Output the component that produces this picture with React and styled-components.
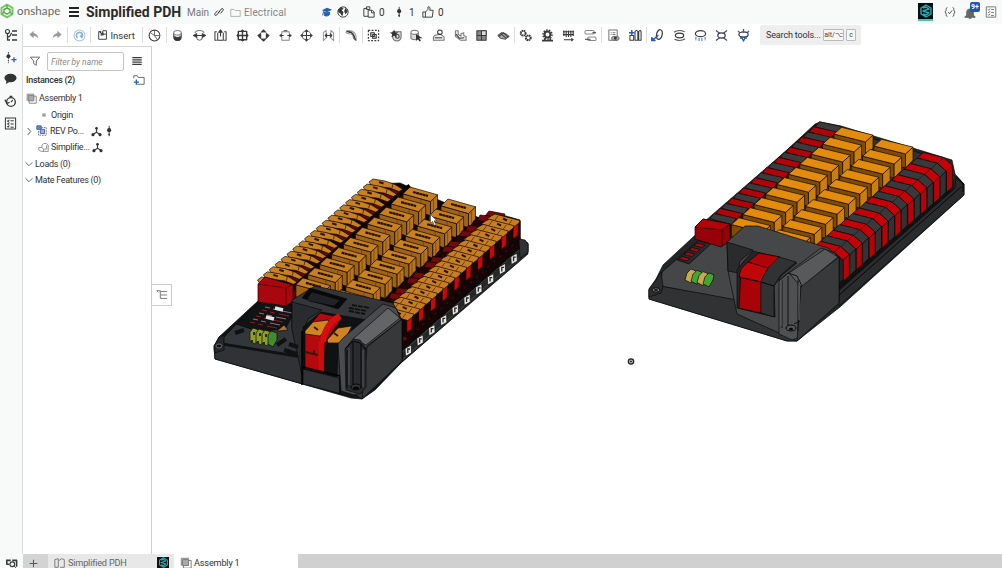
import React from 'react';
import styled, { createGlobalStyle } from 'styled-components';

const Global = createGlobalStyle`
  * { box-sizing: border-box; }
  body { margin: 0; overflow: hidden; background: #fff; font-family: Roboto, "Liberation Sans", sans-serif; color: #333; font-size: 9px; }
`;
const Page = styled.div`width: 1002px; height: 568px; display: flex; flex-direction: column; overflow: hidden;`;
const Header = styled.header`height: 24px; background: #f8f9f9; display: flex; align-items: center; flex: none;`;
const Brand = styled.div`width: 69px; display: flex; align-items: center; gap: 3px; font-family: Lato, sans-serif; font-size: 11.5px; letter-spacing: 0.12px; color: #666; line-height: 20px; padding-bottom: 2px;`;
const Menu = styled.div`width: 10px; height: 10px; display: flex; flex-direction: column; justify-content: space-between; i { height: 2px; background: #222; }`;
const Title = styled.h1`margin: 0 0 0 7px; font-size: 14px; width: 101px; white-space: nowrap; color: #2b2b2b;`;
const Label = styled.span`font-size: ${p => p.$size || 9}px; width: ${p => p.$w ? p.$w + 'px' : 'auto'}; font-weight: ${p => p.$bold ? 500 : 400}; color: ${p => p.$c || '#333'}; letter-spacing: ${p => p.$ls || 0}px; white-space: nowrap; flex: none;`;
const Glyph = styled.svg`width: ${p => p.$s || 14}px; height: ${p => p.$s || 14}px; flex: none; fill: none; stroke: ${p => p.$c || '#3a3a3a'}; stroke-width: ${p => p.$sw || 1.1}; stroke-linejoin: round; overflow: visible;`;
const Spacer = styled.div`width: ${p => p.$w}px; flex: none;`;
const HeaderRight = styled.div`margin-left: auto; display: flex; align-items: center; height: 24px; padding-right: 5px;`;
const Avatar = styled.div`width: 15px; height: 18px; background: #0c0d12; border-bottom: 2px solid #48c9a6; display: grid; place-items: center;`;
const Bell = styled.div`position: relative; width: 18px; height: 16px; display: flex; align-items: end;`;
const Badge = styled.span`position: absolute; left: 6px; top: -2px; width: 10px; height: 10px; border-radius: 2px; background: #1f57b5; color: white; font-size: 7px; line-height: 10px; text-align: center; font-weight: 700;`;

const Main = styled.div`flex: 1; display: flex; min-height: 0;`;
const Rail = styled.aside`width: 23px; background: #f8f9f9; border-right: 1px solid #dcdcdc; display: flex; flex-direction: column; align-items: center; padding: 4px 1px 0 0;`;
const RailItem = styled.div`height: ${p => p.$h}px; display: flex; align-items: center;`;
const Work = styled.div`flex: 1; display: flex; flex-direction: column; min-width: 0;`;
const Toolbar = styled.nav`height: 22px; display: flex; align-items: center; flex: none;`;
const Group = styled.div`width: ${p => p.$w}px; height: 16px; display: flex; align-items: center; justify-content: space-around; flex: none; border-left: ${p => p.$first ? 0 : 1}px solid #ddd;`;
const Insert = styled.div`display: flex; align-items: center; gap: 2px; width: 40px; font-size: 9.5px;`;
const Search = styled.div`margin-left: 6px; width: 101px; height: 20px; background: #eeeeee; border-radius: 2px; display: flex; align-items: center; padding-left: 6px; gap: 2px; font-size: 9px; color: #444;`;
const Key = styled.span`border: 1px solid #bbb; border-radius: 1px; height: 12px; width: ${p => p.$w}px; line-height: 10px; text-align: center; font-size: 7px; background: #f6f6f6; white-space: nowrap;`;
const Content = styled.div`flex: 1; display: flex; min-height: 0;`;
const Tree = styled.section`width: 129px; border-top: 1px solid #d4d4d4; border-right: 1px solid #d0d0d0; flex: none; padding-top: 4px; ${Label} { letter-spacing: -0.3px; }`;
const Row = styled.div`height: ${p => p.$h || 16.2}px; display: flex; align-items: center; padding-left: ${p => p.$x}px; gap: 2px;`;
const Filter = styled.div`width: 77px; height: 19px; margin: 0 5px 0 4px; border: 1px solid #c5c5c5; border-radius: 2px; color: #8a8a8a; font-style: italic; line-height: 18px; padding-left: 3px; font-size: 8.5px;`;
const View = styled.main`flex: 1; position: relative;`;
const Scene = styled.svg`display: block; width: 850px; height: 508px;`;
const ListToggle = styled.div`position: absolute; left: -1px; top: 238px; width: 21px; height: 22px; border: 1px solid #ccc; background: #fff; display: grid; place-items: center;`;
const Tabs = styled.footer`height: 14px; background: #d0d0d0; display: flex; flex: none;`;
const Corner = styled.div`width: 23px; background: #f8f9f9; display: grid; place-items: center; padding-top: 4px;`;
const Add = styled.div`width: 25px; background: #d3d3d3; display: grid; place-items: center; padding: 4px 4px 0 0;`;
const Tab = styled.div`width: ${p => p.$w}px; background: ${p => p.$active ? '#fff' : '#e8e8e8'}; display: flex; align-items: center; gap: 2px; padding: 3px 0 0 6px; color: ${p => p.$active ? '#333' : '#666'}; font-size: 9.2px; letter-spacing: -0.2px; white-space: nowrap; overflow: hidden;`;
const TabLogo = styled.div`width: 12px; height: 12px; background: #111; margin-left: auto; margin-right: 5px; display: grid; place-items: center;`;

const K = '#333';
const B = '#2660b0';
const art = {
  undo: <path d="M6 2L1.500 6 6 10V7.500c3 0 4 1 5 3C11 7 9 4.500 6 4.500z" fill="#999" stroke="none" />,
  redo: <path d="M8 2l4.500 4L8 10V7.500c-3 0-4 1-5 3C3 7 5 4.500 8 4.500z" fill="#999" stroke="none" />,
  update: <><circle cx="7" cy="7" r="5.900" stroke="#a9c3df" /><path d="M5 9.5A3.3 3.3 0 1 1 9.5 9L7.4 7M9.5 9V6" stroke="#8fb2d8" strokeWidth="1.800" /></>,
  insert: <><path d="M5 3H2v9h9V6M7 2h4v4H6z" /><path d="M3 3l4 4M7 4v3H4" strokeWidth="1.4" /></>,
  clock: <><circle cx="7" cy="7" r="5.8" /><path d="M7 2v5h5M2.500 4L7 7l3 4.500" strokeWidth=".8" /></>,
  m0: <><path d="M3 4v5c0 4 8 4 8 0V4" fill="#ddd" /><ellipse cx="7" cy="4" rx="4" ry="2.500" fill="#fff" stroke="#888" /><path d="M4 8c1 2 5 2 6 0v3c-1 2-5 2-6 0z" fill={K} /></>,
  m1: <><path d="M2 4.500c1-4 9-4 10 0M4 9c0 4 6 4 6 0" stroke="#777" /><path d="M.5 7L4 5v4zM13.500 7L10 5v4zM4 7h6" fill={K} /></>,
  m2: <><path d="M3 3H1v9h2M11 3h2v9h-2M4 4v8h6V4" /><path d="M7 8V2M5 3.500L7 1l2 2.500z" fill={K} /></>,
  m3: <><path d="M2.500 2.500h9v9h-9zM7 1v12M1 7h12" strokeWidth="1.5" /><path d="M5 3l2-2 2 2M5 11l2 2 2-2M3 5L1 7l2 2M11 5l2 2-2 2" /></>,
  m4: <><circle cx="7" cy="7" r="4" stroke="#888" /><path d="M5 3l2-2 2 2zM5 11l2 2 2-2zM4 5L1 7l3 3zM10 5l3 2-3 3z" fill={K} /></>,
  m5: <><path d="M3 6V3h8v3M3 8v4h8V8" stroke="#888" /><path d="M1 7h4M13 7H9M3 5.500L1 7l2 1.500M11 5.500L13 7l-2 1.500M5 2h4" /></>,
  m6: <><circle cx="7" cy="7" r="4.800" stroke="#777" /><path d="M.5 7h13M7 .5v13M5.500 3L7 1l1.500 2M3 5.500L1 7l2 1.500M11 5.500L13 7l-2 1.500M5.500 11L7 13l1.500-2" /></>,
  m7: <><path d="M1.500 12.500V4l3-2.500v8zM12.500 12.500V4l-3-2.500v8z" stroke="#999" /><path d="M3.500 7h7M5.500 5L3.500 7l2 2M8.500 5l2 2-2 2" strokeWidth="1.200" /></>,
  limit: <><path d="M1 4l3-2.500c6 0 9 5 8 11L9 10C9 6 7 5 4 5z" stroke="#999" /><path d="M4 3c4 0 6 4 6 7M1.500 2l4 2M9.500 7l2 5" strokeWidth="1.500" /></>,
  group: <><path d="M1.500 1.500h11v11h-11z" strokeDasharray="2 1.500" strokeWidth="1.300" /><path d="M4 4h4v4H4zM6 6h4v4H6z" fill="#ccc" /></>,
  star: <><path d="M4 3h9v6c0 2-2 4-4.500 4S4 11 4 9z" fill="#ddd" stroke="#666" /><path d="M5.500.5l1.200 3 3.300.2-2.400 2 .8 3.300-2.900-1.800L2.600 9l.8-3.300L1 3.700l3.300-.2z" fill={K} stroke="none" /><circle cx="9" cy="8" r="2" /></>,
  select: <><path d="M1 4v6c1 2 7 2 8 0V4" fill="#ddd" stroke="#777" /><ellipse cx="5" cy="3.500" rx="4" ry="2.200" fill="#fff" stroke="#777" /><path d="M6.500 5.500v7.500l2-2 1.800 2.500 1.500-1L10 10h3.500z" fill={K} stroke="none" /></>,
  fix: <><path d="M1.500 8.500l2-2h2l2-1.500 3 1.500 2.500 2V12h-11.500z" fill="#eee" stroke="#777" /><circle cx="8.500" cy="3.500" r="2.500" /><path d="M3 9.500h8" /></>,
  mate: <><path d="M1.500 2h3v4l3 1.500V5l3-1v3l2.500 1v4H7L1.500 8z" fill="#eee" stroke="#777" /><path d="M2 5.500L6 10l5-.5" /></>,
  table: <><path d="M2 2h10v10H2z" fill="#888" /><path d="M7 2h5v5H7zM7 2v10M2 7h10" fill="#ddd" /></>,
  wave: <><path d="M1 7l4-3 4 1 4 3-4 3-5-1z" fill="#aaa" stroke="#555" /><path d="M2 8l5-4 5 5M4 5l6 5" /></>,
  gears: <><circle cx="4.500" cy="4.500" r="2.600" strokeWidth="2.200" strokeDasharray="1.600 .5" /><circle cx="10" cy="9.500" r="2.600" strokeWidth="2.200" strokeDasharray="1.600 .5" /></>,
  gear: <><circle cx="7" cy="6" r="3.200" strokeWidth="2.200" /><circle cx="7" cy="6" r="4.900" strokeDasharray="1.700 1.300" strokeWidth="1.500" /><path d="M1 12.500h12M4 10v2M10 10v2" strokeWidth="1.800" /></>,
  spring: <><path d="M2 1.500v6M4.500 1.500v7M7 1.500v7M9.500 1.500v7M12 1.500v6M1 3h12M1 6h12" strokeWidth="1.200" /><path d="M2 11.500h10M10 10l2 1.500-2 1.500" /></>,
  conv: <><rect x="1" y="1.500" width="10" height="4" rx="1.500" stroke="#888" /><rect x="4" y="8.500" width="9" height="4" rx="1.500" stroke="#888" /><path d="M9 4h4M1 11h6" /></>,
  bom: <><path d="M2 1h9v11H2zM4 4h1M6 4h3M4 6h1M6 6h3" stroke="#777" /><ellipse cx="9" cy="10" rx="4" ry="2.300" fill="#aaa" stroke="#777" /><circle cx="9" cy="10" r="1" fill={K} /></>,
  align: <><path d="M6.500 2.500l1.500-1 1.500 1V12h-3zM10.500 2.500l1.500-1 1 1V12h-2.500zM1 7h4v5H1z" /><path d="M0 4h6M3 1v6" stroke={B} strokeWidth="1.600" /></>,
  v0: <><ellipse cx="9" cy="6" rx="3" ry="5.300" transform="rotate(12 9 6)" strokeWidth="1.300" /><path d="M8 6.500l-5 4.500M.8 9.500v3h3.500z" stroke={B} strokeWidth="1.600" /></>,
  v1: <><ellipse cx="7" cy="7" rx="4.500" ry="2.500" strokeWidth="1.300" /><path d="M1 3.500C4 1.500 9 1.500 12.500 3M13 10.500c-3 2-8 2-11.500.5" stroke="#555" /></>,
  v2: <><ellipse cx="7" cy="5" rx="5.500" ry="3.300" strokeWidth="1.300" /><path d="M2 9v3M5.500 10v3M8.500 10v3M12 9v3" stroke={B} strokeWidth="1.300" strokeDasharray="1.500 .7" /></>,
  v3: <><ellipse cx="7" cy="7" rx="4" ry="2.800" strokeWidth="1.300" /><path d="M1 1.500L5 4.500M13 1.500L9 4.500M1 12.500l4-3M13 12.500L9 9.500" stroke="#3c5274" strokeWidth="1.300" /></>,
  v4: <><ellipse cx="7" cy="6" rx="5" ry="2.800" strokeWidth="1.300" /><path d="M1 2l2 2M13 2l-2 2M7 0v4M5 9l2 4 2-4zM4 9v1.500M10 9v1.500" stroke={B} strokeWidth="1.400" /></>,
  history: <><circle cx="3.500" cy="3.500" r="2" /><path d="M3.500 5.500V12H6M4 9c3 0 2-3 4-4" strokeWidth="1.300" /><path d="M8 3h5M8 7h5M8 12h5" strokeWidth="1.500" /></>,
  version: <><path d="M6 1v12" /><circle cx="6" cy="6" r="2.400" fill={K} stroke="none" /><circle cx="6" cy="11" r="1" fill={K} stroke="none" /></>,
  versionAdd: <><path d="M4 0v13" strokeDasharray="2 1" /><circle cx="4" cy="5" r="2.300" fill={K} stroke="none" /><path d="M7.500 9h6M10.500 6v6" stroke={B} strokeWidth="1.500" /></>,
  comment: <><ellipse cx="7" cy="6.500" rx="6.500" ry="4.500" fill={K} stroke="none" /><path d="M3 8l-1 5 5-3" fill={K} stroke="none" /></>,
  timer: <><circle cx="7.500" cy="7.500" r="4.700" strokeWidth="1.500" /><path d="M7.500 7.500l2-2M6 1.500h3M1 5l2 4 3-1" strokeWidth="1.300" /></>,
  checklist: <><rect x="1.500" y="1" width="11" height="12" /><path d="M3.500 4l1 1 1.200-2M7 4h3.500M3.500 7l1 1 1.200-2M7 7.500h3.500M3.500 10l1 1 1.200-2M7 11h3.500" /></>,
  filter: <path d="M1.500 2.500h11L8.500 7v5l-3-2V7z" stroke="#666" />,
  list: <path d="M1.500 3h11M1.500 5.700h11M1.500 8.400h11M1.500 11h11" strokeWidth="1.500" />,
  folderAdd: <><path d="M1 5V2h4l1 2h7v8H5" stroke="#666" /><path d="M1 9.500h6M4 6.500v6" stroke={B} strokeWidth="1.600" /></>,
  folder: <path d="M1 3h4l1.500 1.500H13V12H1z" stroke="#aaa" />,
  asm: <><path d="M4 4h9v9H4z" stroke="#777" /><path d="M1.500 10V1.500h9" stroke="#777" /><path d="M3 3h7v7H3z" fill="#aaa" stroke="#777" /></>,
  asmBlue: <><path d="M1 1h5v4H1z" fill="#7794ca" stroke={B} /><path d="M3 3h9v9H3z" stroke="#777" strokeDasharray="2 1" /><path d="M5 5h5v5H5z" fill="#9cafda" stroke="#4062a6" /></>,
  part: <path d="M1 7h4V4l2-2h4l2 2v8H4L1 10zM5 7l2 2h4V4M7 9v3" stroke="#888" />,
  mates: <><path d="M7 2v6l-5 3M7 8l5 3" strokeWidth="1.500" /><circle cx="7" cy="3" r="1.700" fill={K} stroke="none" /><circle cx="2.500" cy="11" r="2" fill={K} stroke="none" /><circle cx="11.500" cy="11" r="2" fill={K} stroke="none" /></>,
  right: <path d="M4 1.500l5 5.500-5 5.500" stroke="#555" strokeWidth="1.500" />,
  down: <path d="M1 4l6 6 6-6" stroke="#555" strokeWidth="1.500" />,
  link: <path d="M6 8L10 3c2-2 4 0 2.500 2L9 9M8 6l-4 5c-2 2-4 0-2.500-2L5 5M5.500 8.500l3-3" strokeWidth="1.400" />,
  cap: <><path d="M1 5l6-3 6 2.500-6 2.800z" fill={B} stroke="none" /><path d="M4 7v4c2 1 4 1 6-1V7l-3 1zM3 6l-1 5" fill={B} stroke={B} /></>,
  globe: <><circle cx="7" cy="7" r="6" /><path d="M2 4l3-2 2 1-2 2 2 2-1 4-2-3-2-1zM10 3l2 3-2 3-1-3z" fill={K} /></>,
  paste: <path d="M5 3H1v9h5M4 1h4v3H4zM6 5h5l2 2v6H6zM10 5v3h3" />,
  thumb: <path d="M1 7h3v6H1zM4 7l3-3V1c2-1 3 2 2 4h4l-1 8H4" />,
  braces: <path d="M4 1.500C1 2 4 6 1 7c3 1 0 5 3 5.500M10 1.500c3 .5 0 4.500 3 5.500-3 1 0 5-3 5.500M5 7l1.500 2L9.500 5" />,
  bell: <path d="M1 11l2-2V6c0-5 7-5 7 0v3l2 2zM5 12h3" fill="#666" stroke="#666" />,
  cube: <path d="M7 1l5 3v6l-5 3-5-3V4zM4 4l3-1 3 2-6 2 6 2-3 2-3-1" stroke="#21aeb6" strokeWidth="1.400" />,
  listTree: <path d="M1 2h4M5 2v9M5 3h8M5 7h8M5 11h8M1 2l2 2" stroke="#777" />,
  plus: <path d="M1 7h12M7 1v12" stroke="#555" strokeWidth="1.600" />,
  studio: <path d="M1 3l4-1v10H1zM6 4l3-2 3 1v9H7" stroke="#777" />,
  inspect: <><path d="M0 3h6M1 3v5h3M8 3h5.500v8" strokeWidth="2" /><circle cx="8" cy="8" r="3" strokeWidth="1.500" /><path d="M10 10l3 3" /></>,
  logo: <><path d="M7 .7l5.500 3.100v6.400L7 13.300 1.500 10.200V3.800z" stroke="#7fc36b" strokeWidth="2" /><path d="M7 4l3 1.500v3L7 10.200 4 8.500v-3zM7 1v3M1.500 10L4 8.500M12.500 10L10 8.500" stroke="#4da844" strokeWidth="1.400" /></>,
};
const Icon = ({ name, s, c, sw }) => <Glyph viewBox="0 0 14 14" $s={s} $c={c} $sw={sw}>{art[name]}</Glyph>;

const P = ({ d, f, s = '#0a0a0a', w = 0.7 }) => <polygon points={d} fill={f} stroke={s} strokeWidth={w} strokeLinejoin="round" />;
const quad = (x, y, pts) => pts.map(([a, b]) => `${(x + a).toFixed(1)},${(y + b).toFixed(1)}`).join(' ');
const range = n => Array.from({ length: n }, (_, i) => i);

function Block({ x, y, detailed }) {
  const w = detailed ? 27.5 : 31.5;
  const h = detailed ? 7.8 : 7.8;
  const e = detailed ? 7 : 7.5;
  const z = detailed ? 6.8 : 6.8;
  return <g>
    <P d={quad(x, y, [[-e, z], [w - e, h + z], [w - e, h + 21], [-e, 19]])} f={detailed ? '#a16216' : '#824b02'} />
    <P d={quad(x, y, [[w - e, h + z], [w, h], [w, h + 13], [w - e, h + 21]])} f={detailed ? '#b7741d' : '#cc7e0c'} />
    <P d={quad(x, y, [[0, 0], [w, h], [w - e, h + z], [-e, z]])} f={detailed ? '#c98120' : '#e28b0c'} />
    {detailed && <><path d={`M${x + 3} ${y + 5}l15 4`} stroke="#241300" strokeWidth="2.200" strokeDasharray="3 .3" /><path d={`M${x + 11} ${y + 12}v8M${x + w - 4} ${y + h + 5}v12`} stroke="#6b3e09" strokeWidth=".7" /></>}
  </g>;
}

function DetailedModel() {
  return <g>
    <P d="214,346 219,337 258,301 371,184 402,190 484,220 520,221 520,239 528,243 528,252 402,362 375,390 362,399 351,398 215,359" f="#151515" />
    <P d="373,184 400,183 441,201 484,220 520,221 520,250 405,350 300,310 258,288" f="#100605" />
    {range(20).map(k => 19 - k).map(i => {
      const x = 257.500 + i * 5.870, y = 279 - i * 5.160;
      return <g key={i}>
        <P d={quad(x, y, [[5, 5], [30, 9], [39, 7], [38, 18], [30, 24], [5, 18]])} f={i % 4 === 1 ? '#1b0706' : '#610909'} s="#180303" />
        <path d={`M${x + 35} ${y + 10}l6-5`} stroke="#100303" strokeWidth="5" />
        <P d={quad(x, y, [[0, 1], [4, -2], [16, 0], [26, 3.5], [34, 8.500], [30, 10.500], [21, 7], [9, 5.500], [2, 4]])} f="#c9801f" />
        <path d={`M${x + 10} ${y + 1}l4.500 1.500`} stroke="#2d1605" strokeWidth="2" /><path d={`M${x + 24} ${y + 3}l-1 4`} stroke="#5a300a" strokeWidth="1" />
      </g>;
    })}
    {range(10).map(k => <React.Fragment key={k}><Block x={410 - 11.900 * k} y={187 + 10.100 * k} detailed /><Block x={448 - 11.900 * k} y={199 + 10.100 * k} detailed /></React.Fragment>)}
    <P d="486,217 492,212 520,220 520,247 405,348 401,317" f="#120707" />
    <P d="485,216 489,211 505,214 503,219" f="#760b0e" />
    {range(19).map(k => {
      const x = 491 - k * 5.900, y = 216 + k * 5.200;
      return <g key={k}>
        <P d={quad(x, y, [[-11, -1], [-1, 0], [-4, 6], [-14, 5]])} f={k % 3 === 1 ? '#200506' : '#700a0e'} s="#170303" />
        <P d={quad(x, y, [[20, 7], [28, 5], [27, 24], [20, 30]])} f="#160607" s="#100303" />
        {k % 2 === 0 && <P d={quad(x, y, [[22, 9], [27.500, 5], [27, 19], [22, 23]])} f="#cb070c" s="#210304" />}
        <circle cx={x + 20} cy={y + 29} r="2.500" fill="#5d0b12" stroke="#150304" />
        <P d={quad(x, y, [[0, 0], [4, -2], [29, 4.500], [28, 7], [23, 11], [0, 4], [-4, 3]])} f="#c87e20" />
        <path d={`M${x + 12} ${y + 2.500}l4 2`} stroke="#2a1304" strokeWidth="2" /><path d={`M${x + 7} ${y}l-3 4M${x + 21} ${y + 4}l-3 4`} stroke="#5a300a" strokeWidth=".9" />
      </g>;
    })}
    <P d="402,351 520,249 521,240 528,244 528,254 402,362" f="#252728" />
    <path d="M402 352L520 249M402 360L528 250" stroke="#515151" fill="none" strokeWidth=".7" />
    <P d="519,239 525,240 528,244 528,252 520,258" f="#303234" />
    {range(10).map(i => <g key={i}><P d={quad(408.500 + i * 11.750, 350.500 - i * 10.200, [[-3.500, -2], [2.800, -5.500], [3, 2.500], [-3, 5.800]])} f="#e6e6e3" /><path d={`M${407.800 + i * 11.750} ${353 - i * 10.200}v-4h2.200`} stroke="#252525" strokeWidth="1.300" fill="none" /></g>)}
    <P d="214,348 223,345 302,358 303,384 215,359" f="#303235" />
    <P d="223,338 258,302 302,318 302,356 222,343" f="#33363a" />
    <P d="214,346 220,336 224,336 224,350 215,353" f="#25272a" />
    <ellipse cx="219" cy="346" rx="3" ry="2" fill="#111" stroke="#65686a" />
    <P d="236,324 260,301 297,306 286,328 260,332" f="#111315" />
    {range(6).map(i => <path key={i} d={`M${250 + i * 3} ${322 - i * 3}l5 1m3 1l5 1m4 1l10 2`} stroke={i % 2 ? '#777' : '#8f1a1e'} strokeWidth="1.200" />)}
    <path d="M275 308l8 2M266 317l8 2" stroke="#e2e2e2" strokeWidth="3.500" />
    <P d="277,331 284,325 288,330 279,331" f="#b47031" />
    <P d="258,284 265,277 293,285 293,301 286,306 258,302" f="#a80710" />
    <path d="M258 284l28 4 7-4M286 288v17" stroke="#5b080b" fill="none" />
    <P d="292,300 315,286 393,303 402,320 402,362 362,399 300,360 292,328" f="#343639" />
    <P d="302,298 310,288 347,299 338,309" f="#080909" />
    <P d="307,299 312,292 340,300 334,306 309,301" f="#202225" />
    <path d="M349 308l18 3M349 311l16 3M352 305l18 3" stroke="#111" strokeWidth="1.800" strokeDasharray="5 1" />
    <P d="292,302 322,310 308,319 303,331 303,380 292,330" f="#292b2e" />
    <P d="303,327 321,312 367,320 348,332 338,345 337,377 303,370" f="#101113" />
    <P d="305,331 320,313 342,318 325,342 324,373 305,369" f="#b4090d" />
    <P d="305,331 313,322 328,320 330,325 320,336 305,334" f="#d08421" />
    <P d="327,340 338,328 352,326 343,343 328,343" f="#d08421" />
    <path d="M323 342Q325 324 340 316" stroke="#d40f0f" fill="none" strokeWidth="6" />
    <path d="M321 342v30" stroke="#ce0c0c" strokeWidth="5" />
    <path d="M314 327l4 3M334 333l4 3M314 350v4M305 352l13 3" stroke="#3d1805" strokeWidth="2" />
    <P d="303,369 339,378 342,394 303,384" f="#303236" />
    <path d="M303 367l37 9M302 331v54M340 376v18" stroke="#020202" strokeWidth="1.500" />
    <P d="338,344 343,338 383,304 396,308 401,320 367,346 367,391 354,395 341,391" f="#494b4e" />
    <P d="367,347 402,319 402,361 362,399" f="#36383a" />
    <P d="353,339 388,308 400,318 366,345" f="#626466" />
    <P d="345,349 353,339 360,340 366,348 366,387 360,394 346,390" f="#2a2c2f" />
    <path d="M345 349l8-8 7 2 6 7M347 350v38M353 342v44M361 344v44" stroke="#050505" fill="none" />
    <path d="M349 348v37M363 350v37" stroke="#55575a" />
    <ellipse cx="356" cy="387" rx="5" ry="3" fill="#333" stroke="#090909" /><ellipse cx="356" cy="388" rx="3" ry="1.500" fill="#060606" />
    <path d="M235 333l9-3M277 345l9-6M284 350l13 4M289 344l9 3" stroke="#101112" strokeWidth="4" />
    {range(4).map(i => <P key={i} d={quad(250 + i * 6, 334 + i, [[0, -2], [3, -6], [9, -4], [9, 3], [5, 10], [0, 7]])} f={i < 3 ? '#8f9d2b' : '#438a32'} />)}
    {range(3).map(i => <path key={i} d={`M${254 + i * 6} ${332 + i}v3m-2 5v3`} stroke="#22310b" strokeWidth="2" />)}
    <path d="M430.500 214.500v9l2-2 2 4 1.500-.7-2-4h2.800z" fill="#fff" stroke="#222" strokeWidth=".5" />
  </g>;
}

function SimpleModel() {
  return <g>
    <P d="649,289 656,279 663,265 815,124 820,122 841,126 952,160 955,174 964,184 964,195 840,307 797,341 787,341 649,299" f="#242527" />
    <P d="697,228 817,124 845,130 923,154 940,170 835,260 720,245" f="#303234" />
    {range(19).map(i => 18 - i).map(i => {
      const x = 710 + i * 5.850, y = 218.500 - i * 5.100;
      return <g key={i}>
        <P d={quad(x, y, [[20, 5], [27, 1], [27, 11], [20, 19]])} f="#191a1b" />
        <P d={quad(x, y, [[0, 0], [4, -5], [26.500, 0], [22, 5.500], [20, 6], [17, 5]])} f={i % 2 ? '#b0030a' : '#3a3b3d'} s="#180505" />
      </g>;
    })}
    {range(10).map(k => <React.Fragment key={k}><Block x={841.500 - 11.400 * k} y={127.300 + 10.050 * k} /><Block x={881.500 - 11.400 * k} y={139.300 + 10.050 * k} /></React.Fragment>)}
    <path d="M836 294L953 190" stroke="#111" strokeWidth="13" />
    {range(17).map(i => {
      const x = 923.500 - i * 6.450, y = 152.500 + i * 5.550;
      const f = i % 2 ? '#37393b' : '#c40208';
      return <g key={i}>
        <P d={quad(x, y, [[0, 0], [20, 5], [29, 13], [23, 19], [14, 11], [-6, 5.500]])} f={f} />
        <path d={`M${x + 14} ${y + 11}l6-6`} stroke="#151515" strokeWidth=".7" />
        <P d={quad(x, y, [[23, 19], [29, 13], [29, 34], [23, 40]])} f={i % 2 ? '#303234' : '#b80207'} />
      </g>;
    })}
    <P d="838,291 955,188 956,176 964,184 964,195 839,306" f="#292b2c" />
    <path d="M838 296L961 187M953 180v9M956 178l7 6v8" stroke="#090909" fill="none" />
    <P d="649,290 661,286 737,299 795,324 797,341 787,341 649,299" f="#303234" />
    <P d="662,272 700,239 735,240 729,271 737,300 661,286" f="#454648" />
    <P d="649,289 656,280 661,272 663,287 661,293 649,297" f="#2b2d2f" />
    <ellipse cx="656" cy="290" rx="4" ry="2.200" fill="#777" stroke="#080808" /><ellipse cx="656" cy="290" rx="2" ry="1" fill="#171717" />
    <P d="677,260 701,239 713,242 689,264" f="#29292b" />
    {range(5).map(i => <P key={i} d={quad(679 + i * 5, 259 - i * 4.500, [[0, 0], [3, -2.500], [11, -.5], [8, 2]])} f={i < 4 ? '#a40b10' : '#333'} />)}
    <P d="695,227 703,219 730,224 730,241 721,247 695,239" f="#970009" />
    <P d="695,227 703,219 730,224 722,230" f="#b5030a" /><path d="M722 230v16" stroke="#260000" />
    <P d="727,242 745,226 758,226 828,248 839,257 839,302 797,341 737,314 728,271" f="#454749" />
    <P d="727,242 753,250 740,261 738,273 728,271" f="#292b2d" />
    <P d="737,270 743,262 753,251 797,263 781,276 774,286 775,317 737,308" f="#232527" />
    <P d="741,270 759,253 780,257 764,273 761,281 761,313 739,308" f="#a80308" />
    <P d="739,277 741,269 748,262 769,267 763,277 761,282" f="#c00608" />
    <P d="748,262 759,253 780,257 768,268" f="#b00308" />
    <P d="768,268 779,257 796,262 780,276 774,286 774,317 761,313 761,281" f="#303234" />
    <path d="M739 277l22 5 13 4" stroke="#080808" fill="none" />
    <P d="779,280 789,272 821,248 835,253 839,261 801,286 801,337 792,340 779,334" f="#4e5052" />
    <P d="801,286 839,257 839,303 797,341" f="#37393b" />
    <P d="789,273 825,249 838,257 801,287" f="#58595b" />
    <path d="M779 281l9-8 9 3 5 10M782 280v48M788 276v51M798 280v51M794 324l6-3" stroke="#111" fill="none" />
    <path d="M781 280v46M799 283v37" stroke="#606264" />
    <ellipse cx="791" cy="328" rx="5" ry="3" fill="#555" stroke="#090909" /><ellipse cx="791" cy="329" rx="2" ry="1.200" fill="#090909" />
    {range(4).map(i => <P key={i} d={quad(685 + i * 6, 280 + i * 1.300, [[0, 0], [2, -7], [6, -11], [11, -9], [10, -4], [6, 3]])} f={i % 2 ? '#44a536' : '#c9a950'} />)}
  </g>;
}

const Tool = ({ names, w, first }) => <Group $w={w} $first={first}>{names.map(n => <Icon key={n} name={n} s={13} />)}</Group>;

export default function App() {
  return <><Global /><Page>
    <Header>
      <Brand><Icon name="logo" s={14} />onshape</Brand><Menu><i /><i /><i /></Menu>
      <Title>Simplified PDH</Title><Label $size={10} $w={27} $c="#777">Main</Label>
      <Icon name="link" s={10} /><Spacer $w={6} /><Icon name="folder" s={11} /><Spacer $w={3} /><Label $size={10} $w={77} $ls={0.15} $c="#888">Electrical</Label>
      <Icon name="cap" s={12} /><Spacer $w={4} /><Icon name="globe" s={12} /><Spacer $w={14} /><Icon name="paste" s={12} /><Spacer $w={4} /><Label $size={10} $w={15}>0</Label>
      <Icon name="version" s={12} /><Spacer $w={3} /><Label $size={10} $w={13}>1</Label><Icon name="thumb" s={12} /><Spacer $w={4} /><Label $size={10}>0</Label>
      <HeaderRight><Avatar><Icon name="cube" s={14} /></Avatar><Spacer $w={11} /><Icon name="braces" s={12} c="#555" /><Spacer $w={8} /><Bell><Icon name="bell" s={13} /><Badge>9+</Badge></Bell><Spacer $w={3} /><Icon name="checklist" s={12} c="#777" /></HeaderRight>
    </Header>
    <Main>
      <Rail><RailItem $h={14}><Icon name="history" /></RailItem><RailItem $h={31}><Icon name="versionAdd" s={12} /></RailItem><RailItem $h={11}><Icon name="comment" s={13} /></RailItem><RailItem $h={34}><Icon name="timer" s={13} /></RailItem><RailItem $h={11}><Icon name="checklist" s={13} /></RailItem></Rail>
      <Work>
        <Toolbar><Tool first w={44} names={['undo', 'redo']} /><Tool w={23} names={['update']} /><Group $w={52}><Insert><Icon name="insert" s={12} />Insert</Insert></Group><Tool w={24} names={['clock']} /><Tool w={173} names={['m0', 'm1', 'm2', 'm3', 'm4', 'm5', 'm6', 'm7']} /><Tool w={23} names={['limit']} /><Tool w={152} names={['group', 'star', 'select', 'fix', 'mate', 'table', 'wave']} /><Tool w={87} names={['gears', 'gear', 'spring', 'conv']} /><Tool w={45} names={['bom', 'align']} /><Tool w={108} names={['v0', 'v1', 'v2', 'v3', 'v4']} />
          <Search><Label $w={55} $ls={-0.15}>Search tools...</Label><Key $w={21}>alt/⌥</Key><Key $w={10}>c</Key></Search></Toolbar>
        <Content><Tree>
          <Row $x={6} $h={20}><Icon name="filter" s={12} /><Filter>Filter by name</Filter><Icon name="list" s={12} /></Row>
          <Row $x={3} $h={18}><Label $bold $w={105}>Instances (2)</Label><Icon name="folderAdd" s={12} /></Row>
          <Row $x={3} $h={18}><Icon name="asm" s={11} /><Label>Assembly 1</Label></Row>
          <Row $x={19}><Icon name="table" s={4} c="#aaa" /><Spacer $w={1} /><Label>Origin</Label></Row>
          <Row $x={2}><Icon name="right" s={9} /><Icon name="asmBlue" s={12} /><Label $w={39}>REV Po...</Label><Icon name="mates" s={11} /><Icon name="version" s={12} /></Row>
          <Row $x={15}><Icon name="part" s={11} /><Label $w={39}>Simplifie...</Label><Icon name="mates" s={11} /></Row>
          <Row $x={2}><Icon name="down" s={8} /><Label>Loads (0)</Label></Row>
          <Row $x={2}><Icon name="down" s={8} /><Label>Mate Features (0)</Label></Row>
        </Tree><View><Scene viewBox="152 46 850 508"><DetailedModel /><SimpleModel /><circle cx="631" cy="361.500" r="2.700" fill="#aaa" stroke="#222" strokeWidth="1.200" /><circle cx="631" cy="361.500" r=".8" fill="#111" /></Scene><ListToggle><Icon name="listTree" s={12} /></ListToggle></View></Content>
      </Work>
    </Main>
    <Tabs><Corner><Icon name="inspect" s={11} /></Corner><Add><Icon name="plus" s={9} /></Add><Tab $w={126}><Icon name="studio" s={12} />Simplified PDH<TabLogo><Icon name="cube" s={11} /></TabLogo></Tab><Tab $active $w={124}><Icon name="asm" s={12} />Assembly 1</Tab></Tabs>
  </Page></>;
}
